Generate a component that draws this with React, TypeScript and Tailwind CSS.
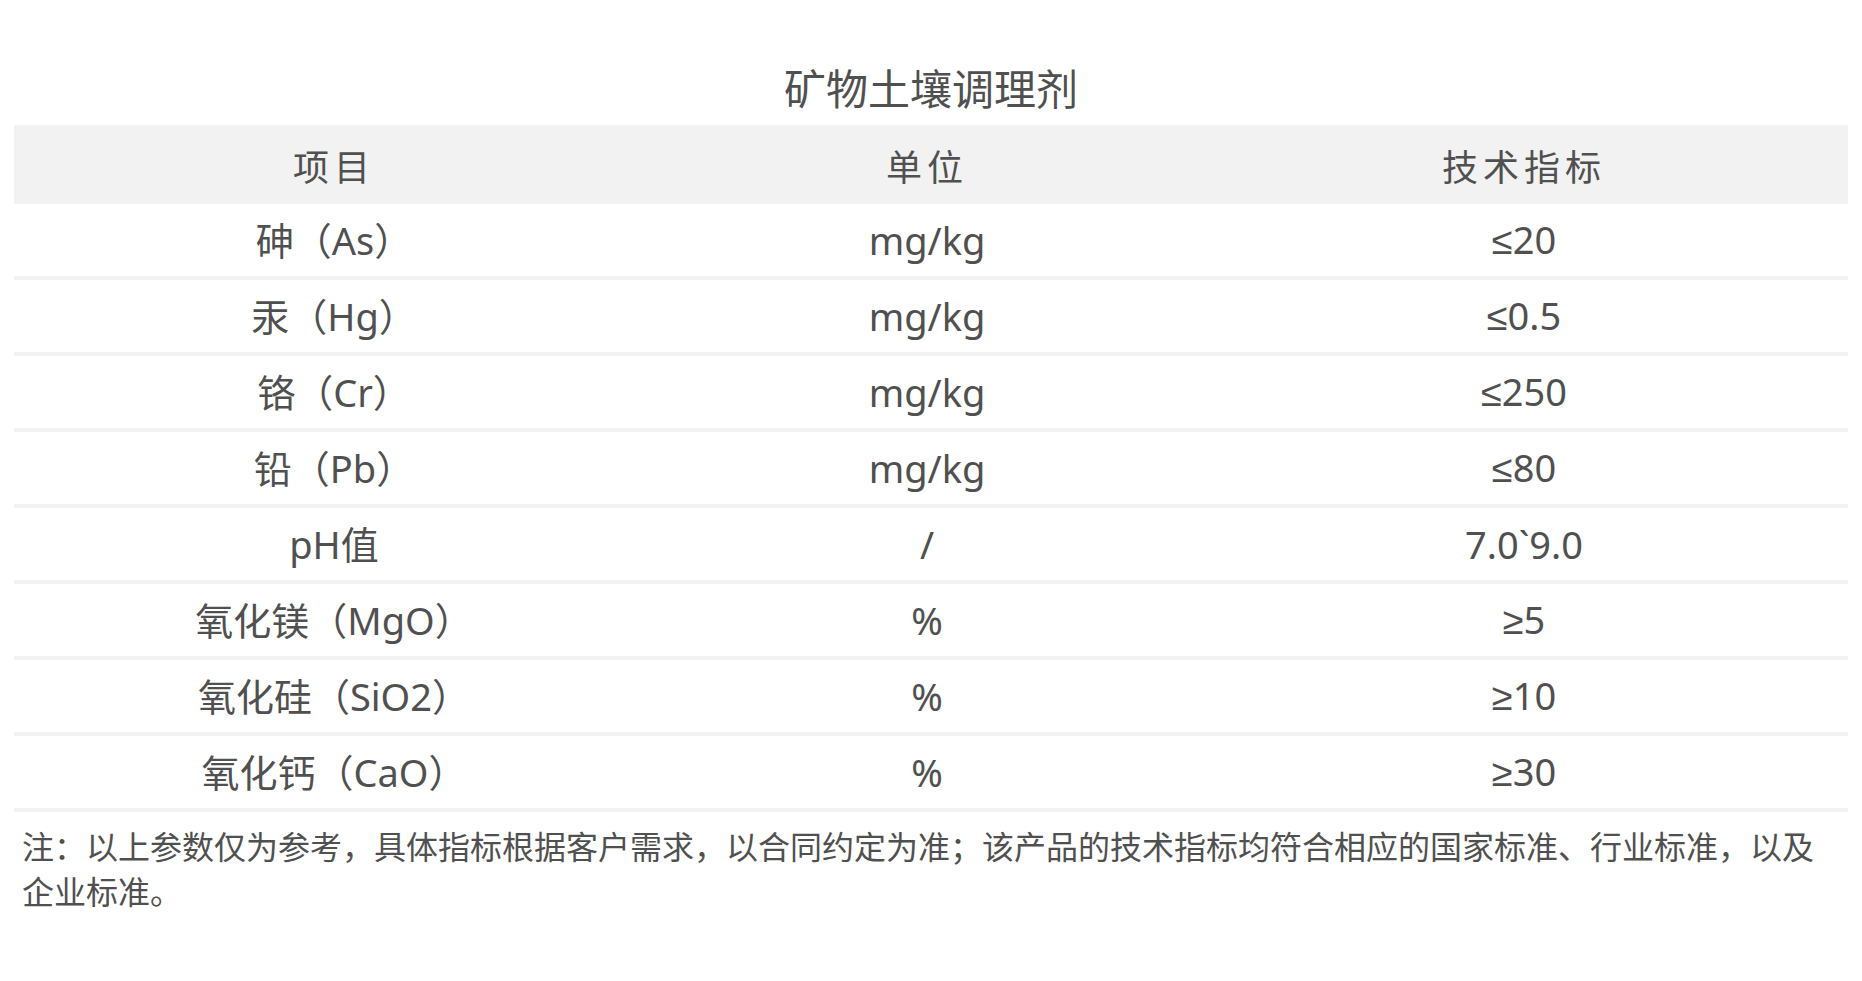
import React from "react";

const rows: [string, string, string][] = [
  ["砷（As）", "mg/kg", "≤20"],
  ["汞（Hg）", "mg/kg", "≤0.5"],
  ["铬（Cr）", "mg/kg", "≤250"],
  ["铅（Pb）", "mg/kg", "≤80"],
  ["pH值", "/", "7.0`9.0"],
  ["氧化镁（MgO）", "%", "≥5"],
  ["氧化硅（SiO2）", "%", "≥10"],
  ["氧化钙（CaO）", "%", "≥30"],
];

function Value({ v }: { v: string }) {
  const first = v.charAt(0);
  if (first === "≤" || first === "≥") {
    return (
      <>
        <span className="font-['Liberation_Sans']">{first}</span>
        {v.slice(1)}
      </>
    );
  }
  return <>{v}</>;
}

export default function App() {
  return (
    <div
      className="w-[1862px] min-h-[981px] bg-white text-[#505050] px-[14px] pt-[64px]"
      style={{ fontFamily: '"Noto Sans", "Noto Sans CJK SC", sans-serif' }}
    >
      <h1 className="text-center text-[42px] leading-[50px] font-normal mb-[11px]">
        矿物土壤调理剂
      </h1>
      <div className="w-full">
        <div className="grid grid-cols-[640px_546px_1fr] h-[79px] pt-[6px] bg-[#f2f2f2] items-center text-[36px] tracking-[5px]">
          <div className="text-center">项目</div>
          <div className="text-center">单位</div>
          <div className="text-center">技术指标</div>
        </div>
        {rows.map((r, i) => (
          <div
            key={i}
            className="grid grid-cols-[640px_546px_1fr] h-[76px] pt-[1px] border-b-[4px] border-[#f2f2f2] items-center text-[38px]"
          >
            <div className="text-center">{r[0]}</div>
            <div className="text-center">{r[1]}</div>
            <div className="text-center">
              <Value v={r[2]} />
            </div>
          </div>
        ))}
      </div>
      <p className="mt-[12px] ml-[8px] w-[1810px] text-[32px] leading-[45px]">
        注：以上参数仅为参考，具体指标根据客户需求，以合同约定为准；该产品的技术指标均符合相应的国家标准、行业标准，以及企业标准。
      </p>
    </div>
  );
}
